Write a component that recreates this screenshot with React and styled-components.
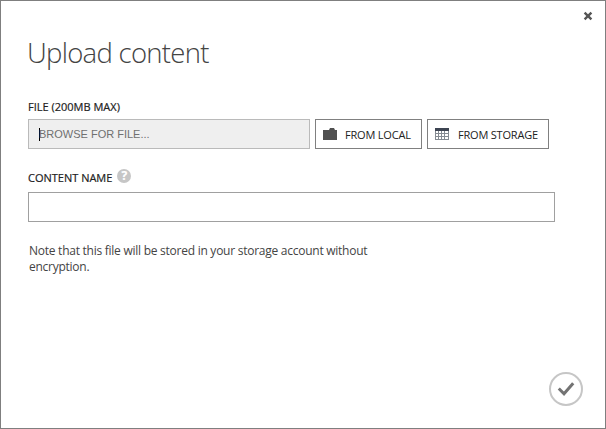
import React from "react";
import styled, { createGlobalStyle } from "styled-components";

const GlobalStyle = createGlobalStyle`
  *, *::before, *::after { box-sizing: border-box; }
  body { margin: 0; background: #fff; }
`;

const Dialog = styled.section`
  display: flex;
  flex-direction: column;
  width: 606px;
  height: 429px;
  padding: 10px 11px 22px 27px;
  border: 1px solid #7f7f7f;
  background: #fff;
  color: #333;
  font-family: "Open Sans", "Noto Sans", sans-serif;
  font-size: 12px;
`;

const CloseButton = styled.button`
  align-self: flex-end;
  display: block;
  width: 12px;
  height: 10px;
  padding: 0;
  border: 0;
  background: none;
  svg { display: block; }
`;

const Title = styled.h1`
  margin: 12px 0 0 -1px;
  height: 40px;
  font-size: 27.5px;
  font-weight: 300;
  line-height: 40px;
  letter-spacing: -0.72px;
  color: #444;
  white-space: nowrap;
`;

const Label = styled.label`
  display: flex;
  align-items: center;
  gap: 5px;
  height: 16px;
  margin-top: ${(p) => p.$top}px;
  font-size: 11px;
  font-weight: 500;
  line-height: 16px;
  letter-spacing: ${(p) => p.$spacing}px;
  color: #222;
  -webkit-text-stroke: 0.2px #222;
  white-space: nowrap;
`;

const FileRow = styled.div`
  display: flex;
  gap: 5px;
  margin-top: 4px;
`;

const FileField = styled.div`
  display: flex;
  align-items: center;
  width: 282px;
  height: 30px;
  padding-left: 10px;
  border: 1px solid #bababa;
  background: #efefef;
  color: #707070;
  font: 11px/14px "Liberation Sans", Arial, sans-serif;
  letter-spacing: ${(p) => p.$spacing}px;
`;

const Caret = styled.span`
  width: 1px;
  height: 13px;
  margin-right: -1px;
  background: #000;
`;

const SourceButton = styled.button`
  display: flex;
  align-items: center;
  gap: ${(p) => p.$gap}px;
  width: ${(p) => p.$width}px;
  height: 30px;
  padding: 0 0 0 7px;
  border: 1px solid #808080;
  background: #fff;
  color: #222;
  font-family: inherit;
  font-size: 11px;
  letter-spacing: ${(p) => p.$spacing}px;
  white-space: nowrap;
  svg { flex: none; }
`;

const NameInput = styled.input`
  width: 527px;
  height: 30px;
  margin-top: 6px;
  padding: 0 8px;
  border: 1px solid #a0a0a0;
  border-radius: 0;
  background: #fff;
  outline: 0;
`;

const HelpBadge = styled.span`
  display: grid;
  place-items: center;
  width: 14px;
  height: 14px;
  margin-top: -4px;
  border-radius: 50%;
  background: #c6c6c6;
  color: #fff;
  font-size: 12px;
  font-weight: 700;
  line-height: 14px;
  letter-spacing: 0;
  -webkit-text-stroke: 0.2px #fff;
`;

const Note = styled.p`
  width: 360px;
  margin: 21px 0 0 1px;
  font-size: 12px;
  line-height: 16px;
  letter-spacing: ${(p) => p.$spacing}px;
  color: #444;
`;

const ConfirmButton = styled.button`
  align-self: flex-end;
  margin-top: auto;
  margin-right: 11px;
  padding: 0;
  width: 34px;
  height: 34px;
  border: 2px solid #c6c6c6;
  border-radius: 50%;
  background: #fff;
  svg { display: block; }
`;

const CloseIcon = () => (
  <svg width="12" height="10" viewBox="0 0 12 10">
    <path d="M2.6 1.7 9.4 8.3M9.4 1.7 2.6 8.3" stroke="#555" strokeWidth="2.4" fill="none" />
  </svg>
);

const FolderIcon = () => (
  <svg width="14" height="12" viewBox="0 0 14 12">
    <path d="M0 2h6l1-2h4l1 2h2v10H0z" fill="#505050" />
  </svg>
);

const TableIcon = () => (
  <svg width="14" height="12" viewBox="0 0 14 12" shapeRendering="crispEdges">
    <path d="M0 0h14v12H0z" fill="#858b92" />
    <path d="M0 0h14v3H0z" fill="#3d4452" />
    {[3, 6, 9].map((y) =>
      [1, 4, 7, 10].map((x) => (
        <path key={`${x}-${y}`} d={`M${x} ${y}h${x === 10 ? 3 : 2}v2h-${x === 10 ? 3 : 2}z`} fill="#fff" />
      ))
    )}
  </svg>
);

const CheckIcon = () => (
  <svg width="30" height="30" viewBox="0 0 30 30">
    <path d="m7.8 14.5 5.2 5.3 9.2-10.6" stroke="#737373" strokeWidth="3" fill="none" />
  </svg>
);

export default function App() {
  return (
    <>
      <GlobalStyle />
      <Dialog>
        <CloseButton aria-label="Close"><CloseIcon /></CloseButton>
        <Title>Upload content</Title>
        <Label $top={26} $spacing={0}>FILE (200MB MAX)</Label>
        <FileRow>
          <FileField $spacing={0}><Caret />BROWSE FOR FILE...</FileField>
          <SourceButton $width={107} $gap={8} $spacing={-0.2}><FolderIcon />FROM LOCAL</SourceButton>
          <SourceButton $width={122} $gap={9} $spacing={-0.2}><TableIcon />FROM STORAGE</SourceButton>
        </FileRow>
        <Label $top={21} $spacing={0}>CONTENT NAME<HelpBadge>?</HelpBadge></Label>
        <NameInput aria-label="Content name" />
        <Note $spacing={-0.255}>Note that this file will be stored in your storage account without encryption.</Note>
        <ConfirmButton aria-label="Confirm"><CheckIcon /></ConfirmButton>
      </Dialog>
    </>
  );
}
